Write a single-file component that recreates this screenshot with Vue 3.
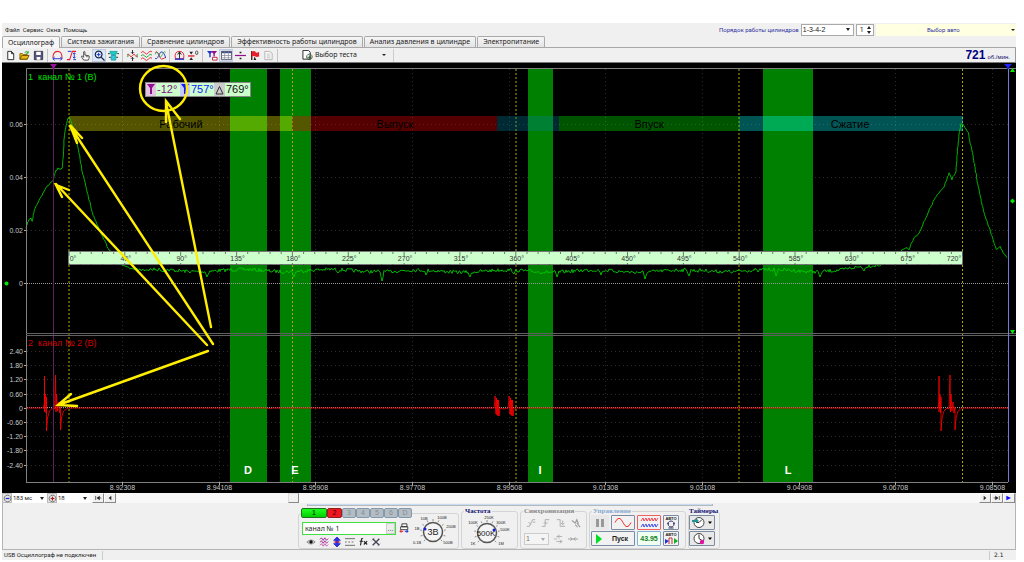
<script setup>
import { ref } from 'vue'

const tabs = ['Осциллограф', 'Система зажигания', 'Сравнение цилиндров', 'Эффективность работы цилиндров', 'Анализ давления в цилиндре', 'Электропитание']
const activeTab = ref(0)
const channel = ref('канал № 1')

const K = '#222', R = '#e8202a', B = '#2030d0', T = '#10a8a0', G = '#18a030', P = '#90108c'
const icons = {
  new: [{ d: 'M3 1.5h4l2.5 2.500v6.500H3zM7 1.500V4h2.500', s: K, f: '#fff' }],
  open: [{ d: 'M1 4h3l1 1h4v5H1z', s: '#806000', f: '#f0c020' }, { d: 'M1 10l2-4h8l-2 4z', s: '#705000', f: '#e8b818' }, { d: 'M6 3q2-3 4 0M10 1v2.500H7.500', s: G }],
  save: [{ d: 'M1.500 1.500h9v9h-9z', s: '#334', f: '#558' }, { d: 'M3.500 2h5v3.500h-5zM4 7.500h4v3H4z', f: '#fff' }],
  dome: [{ d: 'M1 9Q1 1.500 6 1.500T11 9', s: R, w: 1.1 }, { d: 'M1 9.500h10M3 7.500l-2 2 2 2M9 7.500l2 2-2 2', s: B }],
  stretch: [{ d: 'M1 10.500h3L7 1.500h4', s: R, w: 1.1 }, { d: 'M2 1.500h4M8 10.500h3M9 3v6M7.500 4.500L9 3l1.500 1.500M7.500 7.500L9 9l1.500-1.500', s: B }],
  hand: [{ d: 'M4 11L1.500 7l1-.6L4 8V2q.7-1 1.400 0v3.500l4.600 1V9l-1 2z', s: '#333', f: '#fff', w: 0.9 }, { d: 'M7 6v2M8.500 6v2', s: '#333', w: 0.7 }],
  zoom: [{ d: 'M5 1.200a3.700 3.700 0 1 0 .1 0zM8 8l3.500 3.500', s: '#124', w: 1.3 }, { d: 'M3 5h4M5 3v4', s: B }],
  wheel: [{ d: 'M2 1.500h8L8.500 5h-5z', s: T, f: '#20c8c8' }, { d: 'M3.500 6h5v5h-5z', s: '#20a0b0', f: '#30c8d0' }, { d: 'M0 4h2M10 4h2M1 8h2M9 8h2', s: K }],
  center: [{ d: 'M6 0v4M4.500 2.500L6 4l1.500-1.500M6 12V8M4.500 9.500L6 8l1.500 1.500', s: '#223' }, { d: 'M0 6q2-3 3 0t3 0 3 0 3 0', s: R }, { d: 'M0 4l2 2-2 2M12 4l-2 2 2 2', s: G }],
  waves: [{ d: 'M0 3q2-3 4 0t4 0 4-1', s: R }, { d: 'M0 6.500q2-3 4 0t4 0 4-1', s: G }, { d: 'M0 10q2-3 4 0t4 0 4-1', s: R }],
  mix: [{ d: 'M0 3Q2 0 4 5t3 5 5-2', s: R }, { d: 'M0 9Q2 11 4 6t4-4 4 7', s: B }, { d: 'M0 5q2-5 4 0t4 0 4-2', s: G, w: 0.8 }],
  gauge: [{ d: 'M1.500 9.500Q0 1.500 6 1.500t4.500 8z', s: R }, { d: 'M6 2v8M4 5l2-3 2 3', s: K }, { d: 'M1 10h10', s: B, w: 1.5 }],
  zero: [{ d: 'M0 6.500h7', s: R, w: 1.5 }, { d: 'M1.500 2h4l-2 3zM1.500 11h4l-2-3z', f: K }, { d: 'M9.500 1q-1.300 0-1.300 2t1.300 2 1.300-2-1.300-2', s: K, w: 0.8 }],
  marks: [{ d: 'M0 1h6L4 4v4H2.500V4z', f: B }, { d: 'M4 1h7L8.500 4v3H7V4z', f: P }, { d: 'M6 8h5v3H6z', s: '#c02040', f: '#fff' }],
  grid: [{ d: 'M.500 1.500h11v9H.500z', s: '#556', f: '#fff' }, { d: 'M.500 2.500h11', s: '#445080', w: 2 }, { d: 'M.500 6h11M.500 8.500h11M4 2v8.500M8 2v8.500', s: '#889', w: 0.8 }],
  split: [{ d: 'M0 6h12', s: P, w: 1.3 }, { d: 'M5 2h2v1.500H5zM5 8.500h2V10H5z', f: K }],
  flag: [{ d: 'M3 1v10', s: '#300', w: 1.3 }, { d: 'M3 2q3-2 4 0t4 0v5q-3 1-4 0T3 7z', f: R }, { d: 'M6 7l2 4H5z', f: '#222' }],
  list: [{ d: 'M2 1.500h5l3 2v7H2z', s: '#b0b0b0', f: '#fafafa' }, { d: 'M4 4.500h4M4 6.500h4M4 8.500h4', s: '#c0c0c0' }],
  test: [{ d: 'M1 .500h6l2 2V10H1z', s: K, f: '#fff' }, { d: 'M8 4.500a3 3 0 1 0 .1 0zM8 6v4M6 8h4', s: '#3a5a3a', w: 1.2 }],
  printer: [{ d: 'M3.500 1h6v3.500h-6zM2 4.500h8.500V8H2z', s: '#222', f: '#fff' }, { d: 'M1 10h4M1 10l2-1.500M1 10l2 1.500', s: R, w: 1.2 }, { d: 'M7 10h4M11 10L9 8.500M11 10l-2 1.500', s: B, w: 1.2 }],
  eye: [{ d: 'M1 6q5-5 10 0-5 5-10 0', s: '#888', f: '#ccc' }, { d: 'M6 4a2 2 0 1 0 .1 0z', f: '#111' }],
  noise: [{ d: 'M1 3l2-2 2 3 2-3 2 3 2-2M1 6.500l2-2 2 3 2-3 2 3 2-2', s: P }, { d: 'M1 10l2-2 2 3 2-3 2 3 2-2', s: '#c040a0' }],
  updown: [{ d: 'M6 0L2 4h2.500v4H2l4 4 4-4H7.500V4H10z', s: B, f: '#3030e0' }, { d: 'M2 6h8', s: R }],
  lines: [{ d: 'M0 2h12M0 10h12', s: '#555' }, { d: 'M0 6h2M4 6h2M8 6h2', s: '#555' }],
  fx: [{ d: 'M6 2Q4 1 4 4L3 10M2 5h4M7 5l4 4M11 5l-4 4', s: K, w: 1.3 }],
  tools: [{ d: 'M2 2l8 8M2 10l8-8', s: '#445', w: 1.6 }, { d: 'M1 4l3-3M8 11l3-3', s: '#778' }],
  edge1: [{ d: 'M1 10h3L8 2h3M3 5l3 3M8 5h3', s: '#b0b0b0', w: 1.2 }],
  edge2: [{ d: 'M1 10h4V2h5M3 6h5', s: '#b0b0b0', w: 1.2 }],
  edge3: [{ d: 'M1 2h4v8h6M8 3v5M6 6l2 2 2-2', s: '#b0b0b0', w: 1.2 }],
  edge4: [{ d: 'M1 3l4 3 2-4 2 5M7 6l4 5M5 8l3 3', s: '#a0a0a0', w: 1.4 }],
  link1: [{ d: 'M1 6h4M4 3h7M4 9h7M8 1L5 3l3 2M8 7l3 2-3 2', s: '#b0b0b0', w: 1.1 }],
  link2: [{ d: 'M0 6h12M3 4l2 2-2 2M9 4L7 6l2 2', s: '#a0a0a0', w: 1.2 }],
  first: [{ d: 'M2.500 3v6M5 6h6', s: K, w: 1.500 }, { d: 'M8.500 2.500v7L4 6z', f: K }],
  prev: [{ d: 'M8 2.500v7L4 6z', f: K }],
  next: [{ d: 'M4 2.500v7L8 6z', f: K }],
  last: [{ d: 'M9.500 3v6M1 6h6', s: K, w: 1.500 }, { d: 'M3.500 2.500v7L8 6z', f: K }],
  run: [{ d: 'M2 2.500v7L9 6z', f: '#1010ff' }],
  minus: [{ d: 'M6 1.500a4.500 4.500 0 1 0 .1 0z', s: '#555' }, { d: 'M3.500 6h5', s: B, w: 1.6 }],
  plus: [{ d: 'M6 1.500a4.500 4.500 0 1 0 .1 0z', s: '#555' }, { d: 'M3.500 6h5M6 3.500v5', s: '#b01818', w: 1.6 }],
}
const toolGroups = [
  [['new', 'Новый'], ['open', 'Открыть'], ['save', 'Сохранить']],
  [['dome', 'Цикл'], ['stretch', 'Масштаб'], ['hand', 'Рука'], ['zoom', 'Лупа'], ['wheel', 'Прокрутка']],
  [['center', 'Центр'], ['waves', 'Каналы'], ['mix', 'Наложение']],
  [['gauge', 'Градусы'], ['zero', 'Ноль']],
  [['marks', 'Маркеры'], ['grid', 'Сетка'], ['split', 'Разделить'], ['flag', 'Метка'], ['list', 'Список']],
]
const pressed = ['zoom', 'grid']

const gridX = [122.5, 219.5, 315.5, 412.5, 509.5, 605.5, 702.5, 799.5, 895.5, 992.5]
const times = ['8.92308', '8.94108', '8.95908', '8.97708', '8.99508', '9.01308', '9.03108', '9.04908', '9.06708', '9.08508']
const scale1 = [['0.06', 124.5], ['0.04', 177.5], ['0.02', 230.5], ['0', 283.5]]
const scale2 = ['2.40', '1.80', '1.20', '0.60', '0', '-0.60', '-1.20', '-1.80', '-2.40'].map((t, i) => [t, 351.5 + Math.round(i * 14.2)])
const bands = [[230, 37, 'D', 248], [280, 31, 'E', 295], [528, 25, 'I', 540], [763, 50, 'L', 788]]
const deadX = [69, 292.5, 516, 739, 962.5]
const strokes = [
  [69, 223, '#ffff00', 'Рабочий', 181],
  [292, 205, '#ff0000', 'Выпуск', 395],
  [497, 62, '#00809c', '', 0],
  [559, 180, '#00ff00', 'Впуск', 649],
  [739, 224, '#00ffff', 'Сжатие', 850],
]
const degrees = Array.from({ length: 17 }, (_, i) => ({ t: i * 45 + '°', x: i === 0 ? 73 : i === 16 ? 954 : 70 + i * 55.85 }))
const tickPath = Array.from({ length: 81 }, (_, i) => {
  const x = (69 + i * 11.17).toFixed(1), h = i % 5 ? 2 : 4
  return `M${x} 252v${h}M${x} 265v-${i % 5 ? 1 : 2}`
}).join('')

let seed = 7
const rnd = () => (seed = (seed * 16807) % 2147483647) / 2147483647 - 0.5

const lead = [[26, 228], [29, 219], [31, 218], [32, 222], [35, 208], [38, 203], [42, 195], [46, 188], [50, 184], [53, 180], [56, 171], [58, 168], [60, 170], [62, 168], [63, 160], [64, 140], [66, 125], [68, 119], [70, 119], [73, 126], [77, 142], [82, 170], [88, 195], [93, 215], [100, 231], [108, 248], [114, 258], [124, 266], [136, 270]]
const tail = [[880, 265], [895, 256], [902, 250], [907, 248], [909, 250], [913, 240], [920, 231], [927, 215], [935, 198], [944, 187], [949, 173], [952, 179], [956, 171], [957, 155], [959, 135], [961, 124], [964, 125], [968, 133], [972, 150], [977, 180], [982, 205], [987, 222], [992, 236], [996, 249], [1000, 247], [1008, 260]]
const dips = { 163: 272, 207: 277, 294: 277, 338: 273, 382: 281, 426: 275, 470: 277, 514: 274, 557: 277, 601: 275, 645: 279, 689: 276, 732: 273, 758: 272, 776: 276, 820: 277, 864: 271 }
function rough(pts) {
  const out = []
  pts.slice(1).forEach(([x2, y2], i) => {
    const [x1, y1] = pts[i]
    const n = Math.max(1, Math.round(Math.hypot(x2 - x1, y2 - y1) / 2))
    for (let k = 0; k < n; k++) out.push([x1 + ((x2 - x1) * k) / n + rnd() * 0.5, y1 + ((y2 - y1) * k) / n + rnd() * 1.6])
  })
  return out
}
const mid = []
for (let x = 137; x < 880; x++) {
  const near = Object.keys(dips).find(k => Math.abs(x - k) <= 1)
  const bias = x > 380 && x < 700 ? 0.6 : 0
  const slope = x > 840 ? (x - 840) * 0.13 : 0
  const y = 270.5 + bias - slope + Math.sin(x / 14) * 1.1 + rnd() * 3.6
  mid.push([x, near ? (x === +near ? dips[near] : (dips[near] + y) / 2) : y])
}
const trace1 = [...rough(lead), ...mid, ...rough(tail)].map(p => p.map(v => v.toFixed(1)).join(',')).join(' ')

const burst = x => [[0, 408], [1, 402], [1, 376], [1, 412], [2, 394], [2.5, 413], [3, 397], [3, 431], [4, 418], [6, 411], [9, 408], [11, 409], [12, 375], [12.5, 412], [13, 394], [14, 411], [15, 402], [16, 413], [17, 407], [17, 430], [18, 418], [20, 411], [24, 408]].map(([a, b]) => [x + a, b])
const small = x => [[0, 408], [1, 400], [1, 396], [2, 414], [2.5, 398], [3, 415], [3.5, 400], [4, 416], [4.5, 400], [5, 416], [6, 408]].map(([a, b]) => [x + a, b])
const trace2 = [[26, 408], ...burst(43.5), [268, 408], [270, 409], [272, 408], ...small(494), [503, 409], ...small(508), ...burst(938), [1008, 408]].map(p => p.join(',')).join(' ')

const channels = ['1', '2', '3', '4', '5', '6', 'D']
const knobTicks = Array.from({ length: 11 }, (_, i) => {
  const a = ((135 + i * 27) * Math.PI) / 180
  return `M${(28 + 11 * Math.cos(a)).toFixed(1)} ${(20 + 11 * Math.sin(a)).toFixed(1)}L${(28 + 13 * Math.cos(a)).toFixed(1)} ${(20 + 13 * Math.sin(a)).toFixed(1)}`
}).join('')
const knobs = {
  volt: { value: '3В', dot: [20, 17], labels: [['0.1В', 12, 32], ['1В', 12, 18], ['10В', 19, 8], ['100В', 37, 7], ['200В', 46, 16], ['500В', 43, 32]] },
  freq: { value: '500K', dot: [35, 17], labels: [['1K', 14, 32], ['100K', 14, 11], ['250K', 30, 6], ['300K', 42, 11], ['500K', 46, 18], ['1M', 42, 32]] },
}
</script>

<template>
  <div class="page">
    <div class="window">
      <header class="top">
        <nav class="menu">
          <button v-for="m in ['Файл', 'Сервис', 'Окна', 'Помощь']" :key="m">{{ m }}</button>
        </nav>
        <div class="order">
          <label for="order">Порядок работы цилиндров</label>
          <div class="combo"><select id="order"><option>1-3-4-2</option></select><i class="arrow"></i></div>
          <div class="spin"><input value="1" aria-label="Цилиндр" /><span><i class="arrow up"></i><i class="arrow"></i></span></div>
          <button class="car"><span>Выбор авто</span><i class="arrow tiny"></i></button>
        </div>
      </header>

      <div class="tabs">
        <button v-for="(t, i) in tabs" :key="t" :class="{ active: i === activeTab }" @click="activeTab = i">{{ t }}</button>
      </div>

      <div class="toolbar">
        <div v-for="(g, gi) in toolGroups" :key="gi" class="tgroup">
          <button v-for="[n, title] in g" :key="n" :aria-label="title" :class="{ on: pressed.includes(n) }">
            <svg class="ico" viewBox="0 0 12 12"><path v-for="(p, k) in icons[n]" :key="k" :d="p.d" :stroke="p.s || 'none'" :fill="p.f || 'none'" :stroke-width="p.w || 1" /></svg>
          </button>
        </div>
        <button class="test">
          <svg class="ico" viewBox="0 0 12 12"><path v-for="(p, k) in icons.test" :key="k" :d="p.d" :stroke="p.s" :fill="p.f || 'none'" /></svg>
          <span>Выбор теста</span><i class="arrow tiny"></i>
        </button>
        <div class="rpm"><b>721</b><span>об./мин.</span></div>
      </div>

      <svg class="scope" viewBox="2 63 1014 430" role="img" aria-label="Осциллограмма">
        <rect x="2" y="63" width="1014" height="430" fill="#000" />
        <g class="grid">
          <path v-for="x in gridX" :key="x" :d="`M${x} 69V482`" />
          <path v-for="[, y] in scale1" :key="y" :d="`M27 ${y}H1008`" />
          <path v-for="[, y] in scale2" :key="y" :d="`M27 ${y}H1008`" />
        </g>
        <rect v-for="b in bands" :key="b[2]" :x="b[0]" y="69" :width="b[1]" height="413" fill="#008000" />
        <path d="M27 283.500H1008M27 407.500H1008" stroke="#999" stroke-dasharray="1 1" />
        <path v-for="x in deadX" :key="x" :d="`M${x} 69V482`" stroke="#b0a800" stroke-dasharray="2 2" />
        <g class="strokes">
          <template v-for="s in strokes" :key="s[0]">
            <rect :x="s[0]" y="116" :width="s[1]" height="15" :fill="s[2]" opacity="0.33" />
            <text :x="s[4]" y="128">{{ s[3] }}</text>
          </template>
        </g>
        <polyline :points="trace1" fill="none" stroke="#00c800" stroke-width="0.9" />
        <polyline :points="trace2" fill="none" stroke="#f00" stroke-width="0.8" />
        <path d="M53.500 66V482" stroke="#602060" />
        <path d="M26.500 482V68.500H1016M26 482.500H1008" fill="none" stroke="#808080" />
        <path d="M26 333.500H1016M26 335.500H1016" stroke="#606060" />
        <path d="M1008.500 66V482" stroke="#7878d8" />
        <g class="ruler">
          <rect x="68.500" y="251.500" width="894" height="13" fill="#ccffcc" stroke="#777" />
          <path :d="tickPath" stroke="#555" stroke-width="0.8" />
          <text v-for="d in degrees" :key="d.t" :x="d.x" y="261">{{ d.t }}</text>
        </g>
        <g class="scale">
          <text v-for="[t, y] in scale1" :key="t" x="23" :y="y + 2.5">{{ t }}</text>
          <text v-for="[t, y] in scale2" :key="t" x="23" :y="y + 2.5">{{ t }}</text>
          <path v-for="[, y] in scale1.concat(scale2)" :key="y" :d="`M24 ${y}h2`" stroke="#aaa" />
        </g>
        <g class="times">
          <text v-for="(t, i) in times" :key="t" :x="gridX[i]" y="490">{{ t }}</text>
          <path v-for="x in gridX" :key="x" :d="`M${x} 482v3`" stroke="#aaa" />
        </g>
        <text class="chan" x="28" y="80" fill="#00e000">1&#160; канал № 1 (В)</text>
        <text class="chan" x="28" y="346" fill="#d00000">2&#160; канал № 2 (В)</text>
        <text v-for="b in bands" :key="b[2]" class="band" :x="b[3]" y="474">{{ b[2] }}</text>
        <path d="M50 64h7l-2.500 3v2h-2v-2z" fill="#a010a0" />
        <path d="M1004 64h8l-3 3v2h-2v-2z" fill="#2020ff" />
        <path d="M1010 72h5l-2.500-4zM1010 330h5l-2.500 4zM1012.500 198.500l2.500 2.500-2.500 2.500-2.500-2.500z" fill="#00e800" />
        <circle cx="6.500" cy="283.500" r="2" fill="#00e800" />

        <g class="readout">
          <rect x="145.500" y="82.500" width="105" height="14" fill="#ccffcc" stroke="#888" />
          <rect x="146" y="83" width="10" height="13" fill="#e0c4e0" />
          <rect x="180" y="83" width="10" height="13" fill="#c4c8ff" />
          <rect x="214" y="83" width="11" height="13" fill="#ccc" />
          <path d="M147 84h8l-3 4v6h-2v-6z" fill="#901090" />
          <path d="M181 84h8l-3 4v6h-2v-6z" fill="#1018ff" />
          <path d="M216 94l3.500-7.500L223 94z" fill="none" stroke="#333" />
          <text x="157" y="93" fill="#801080">-12°</text>
          <text x="191" y="93" fill="#1018ff">757°</text>
          <text x="226" y="93" fill="#111">769°</text>
        </g>
        <g class="notes">
          <ellipse cx="163.500" cy="88.500" rx="23.500" ry="22.500" />
          <path d="M211 327L166 102M166 122l0-21 14 18" />
          <path d="M213 344L70 126M77 143l-7-18 12 13" />
          <path d="M207 345L56 184M62 197l-6-12 13 5" />
          <path d="M208 351L58 405M71 394l-13 11 19 1" />
        </g>
      </svg>

      <div class="scroll">
        <template v-for="[n, v, c] in [['minus', '183 мс', 'a'], ['plus', '18', 'b']]" :key="n">
          <button class="sq" :aria-label="n"><svg class="ico" viewBox="0 0 12 12"><path v-for="(p, k) in icons[n]" :key="k" :d="p.d" :stroke="p.s" fill="none" :stroke-width="p.w || 1" /></svg></button>
          <div class="combo flat" :class="c"><select :aria-label="n"><option>{{ v }}</option></select><i class="arrow"></i></div>
        </template>
        <button v-for="n in ['first', 'prev']" :key="n" class="nav" :aria-label="n"><svg class="ico" viewBox="0 0 12 12"><path v-for="(p, k) in icons[n]" :key="k" :d="p.d" :stroke="p.s || 'none'" :fill="p.f || 'none'" /></svg></button>
        <div class="track"><span class="thumb"></span></div>
        <button v-for="n in ['next', 'last', 'run']" :key="n" class="nav" :aria-label="n"><svg class="ico" viewBox="0 0 12 12"><path v-for="(p, k) in icons[n]" :key="k" :d="p.d" :stroke="p.s || 'none'" :fill="p.f || 'none'" /></svg></button>
      </div>

      <section class="panel">
        <div class="inner">
          <div class="splitter"></div>
          <div class="groups">
            <fieldset class="channels">
              <legend><button v-for="c in channels" :key="c" :class="'c' + c">{{ c }}</button></legend>
              <div class="chbody">
                <div class="chrow">
                  <div class="name"><input v-model="channel" aria-label="Название канала" /><button>...</button></div>
                  <button class="ic" aria-label="Экспорт"><svg class="ico" viewBox="0 0 12 12"><path v-for="(p, k) in icons.printer" :key="k" :d="p.d" :stroke="p.s" :fill="p.f || 'none'" :stroke-width="p.w || 1" /></svg></button>
                </div>
                <div class="chicons">
                  <button v-for="n in ['eye', 'noise', 'updown', 'lines', 'fx', 'tools']" :key="n" class="ic" :aria-label="n"><svg class="ico" viewBox="0 0 12 12"><path v-for="(p, k) in icons[n]" :key="k" :d="p.d" :stroke="p.s || 'none'" :fill="p.f || 'none'" :stroke-width="p.w || 1" /></svg></button>
                </div>
              </div>
              <svg class="knob" viewBox="0 0 56 36">
                <path :d="knobTicks" stroke="#777" stroke-width="0.8" />
                <circle cx="28" cy="20" r="9.500" fill="#f4f4f4" stroke="#555" stroke-width="1.500" />
                <circle :cx="knobs.volt.dot[0]" :cy="knobs.volt.dot[1]" r="1.500" fill="#1020e0" />
                <text v-for="l in knobs.volt.labels" :key="l[0]" :x="l[1]" :y="l[2]">{{ l[0] }}</text>
                <text class="big" x="28" y="23">{{ knobs.volt.value }}</text>
              </svg>
            </fieldset>
            <fieldset class="freq">
              <legend>Частота</legend>
              <svg class="knob" viewBox="0 0 56 36">
                <path :d="knobTicks" stroke="#777" stroke-width="0.8" />
                <circle cx="28" cy="20" r="9.500" fill="#f4f4f4" stroke="#555" stroke-width="1.500" />
                <circle :cx="knobs.freq.dot[0]" :cy="knobs.freq.dot[1]" r="1.500" fill="#1020e0" />
                <text v-for="l in knobs.freq.labels" :key="l[0] + l[1]" :x="l[1]" :y="l[2]">{{ l[0] }}</text>
                <text class="mid" x="27" y="23">{{ knobs.freq.value }}</text>
              </svg>
            </fieldset>
            <fieldset class="sync">
              <legend>Синхронизация</legend>
              <div class="srow">
                <button v-for="n in ['edge1', 'edge2', 'edge3', 'edge4']" :key="n" class="ic" :aria-label="n"><svg class="ico" viewBox="0 0 12 12"><path v-for="(p, k) in icons[n]" :key="k" :d="p.d" :stroke="p.s" fill="none" :stroke-width="p.w" /></svg></button>
              </div>
              <div class="srow">
                <div class="combo dim"><select aria-label="Канал синхронизации"><option>1</option></select><i class="arrow"></i></div>
                <button v-for="n in ['link1', 'link2']" :key="n" class="ic" :aria-label="n"><svg class="ico" viewBox="0 0 12 12"><path v-for="(p, k) in icons[n]" :key="k" :d="p.d" :stroke="p.s" fill="none" :stroke-width="p.w" /></svg></button>
              </div>
            </fieldset>
            <fieldset class="control">
              <legend>Управление</legend>
              <div class="crow">
                <button class="pause" aria-label="Пауза"><svg viewBox="0 0 18 14"><path d="M6.500 3v8M11.500 3v8" stroke="#999" stroke-width="3" /></svg></button>
                <button class="fr sine" aria-label="Синус"><svg viewBox="0 0 22 13"><path d="M3 6.500Q7-2 11 6.500T19 6.500" fill="none" stroke="#f03030" /></svg></button>
                <button class="fr red" aria-label="Сигналы"><svg viewBox="0 0 22 13"><path d="M3 5l2-3 1 3 2-3 1 3 2-3 1 3 2-3 1 3 2-3 1 3 2-3" fill="none" stroke="#f02030" stroke-width="0.8" /><path d="M3 11l2-3 1 3 2-3 1 3 2-3 1 3 2-3 1 3 2-3 1 3 2-3" fill="none" stroke="#2030e0" stroke-width="0.8" /></svg></button>
                <button class="fr auto" aria-label="Авто"><svg viewBox="0 0 14 13"><text x="7" y="4">АВТО</text><path d="M7 5a3 3 0 1 0 .1 0zM3 7l2 1M11 7l-2 1M4.500 12h5" fill="none" stroke="#336" /></svg></button>
              </div>
              <div class="crow">
                <button class="fr start"><svg viewBox="0 0 8 12"><path d="M1 1l6 5-6 5z" fill="#00e020" /></svg><span>Пуск</span></button>
                <output class="fr val">43.95</output>
                <button class="fr auto" aria-label="Автозапуск"><svg viewBox="0 0 14 13"><text x="7" y="4">АВТО</text><path d="M5 12V6h3v6" fill="none" stroke="#c03030" /><path d="M1 7l4 2-4 3z" fill="#2030e0" /><path d="M10 6l4 3-4 3z" fill="#10b020" /></svg></button>
              </div>
            </fieldset>
            <fieldset class="timers">
              <legend>Таймеры</legend>
              <button class="fr" aria-label="Таймер 1"><svg viewBox="0 0 24 13"><circle cx="9" cy="6.500" r="5" fill="#fff" stroke="#444" /><path d="M9 6.500l3-3M9 6.500H6" stroke="#333" /><path d="M2 4h4V2l3 3-3 2V6H2z" fill="#209090" /><path d="M18 5.500h4l-2 2.500z" fill="#000" /></svg></button>
              <button class="fr" aria-label="Таймер 2"><svg viewBox="0 0 24 13"><circle cx="9" cy="6.500" r="5" fill="#fff" stroke="#444" /><path d="M9 6.500V2.500M9 6.500l3 2" stroke="#333" /><circle cx="12" cy="10" r="2.200" fill="#e010a0" /><path d="M18 5.500h4l-2 2.500z" fill="#000" /></svg></button>
            </fieldset>
          </div>
        </div>
      </section>

      <footer class="status"><span>USB Осциллограф не подключен</span><span></span><span>2.1</span></footer>
    </div>
  </div>
</template>

<style>
body { background: #fff; }
</style>

<style scoped>
.page { padding: 23px 8px 2px 2px; font-family: "Liberation Sans", Arial, sans-serif; font-size: 7px; line-height: 8px; color: #222; }
.window { background: #f0f0f0; }
button, input, select { font: inherit; color: inherit; padding: 0; margin: 0; border: 0; background: none; border-radius: 0; }
select { appearance: none; outline: 0; width: 100%; min-width: 0; }
input { min-width: 0; outline: 0; }
svg { display: block; }
.ico { width: 11px; height: 11px; }
.arrow { border: 2px solid transparent; border-top: 3px solid #222; border-bottom: 0; flex: none; }
.arrow.up { border-top: 0; border-bottom: 3px solid #222; }
.arrow.tiny { border-top-width: 2px; }

.top { display: flex; justify-content: space-between; height: 13px; }
.menu { display: flex; gap: 3px; padding: 2px 3px; font-family: Roboto, sans-serif; font-size: 6px; }
.menu button { white-space: nowrap; }
.order { display: flex; align-items: center; gap: 2px; font-family: Roboto, sans-serif; font-size: 6px; width: 297px; color: #3030a0; }
.order label { flex: 1; white-space: nowrap; }
.combo { display: flex; align-items: center; background: #fff; border: 1px solid #aaa; padding: 0 3px 0 1px; box-sizing: border-box; height: 12px; color: #222; }
.order .combo { width: 54px; font-family: "Liberation Sans", Arial, sans-serif; font-size: 7px; }
.spin { display: flex; align-items: center; justify-content: space-between; width: 18px; height: 12px; box-sizing: border-box; border: 1px solid #aaa; background: #fff; padding: 0 2px 0 3px; color: #222; font-size: 7px; }
.spin input { width: 6px; }
.spin span { display: grid; gap: 2px; }
.car { display: flex; align-items: center; width: 143px; height: 12px; background: #ffffe1; color: #3030a0; padding-right: 1px; }
.car span { flex: 1; }
.car .arrow { border-top-color: #222; }

.tabs { display: flex; height: 12px; border-bottom: 1px solid #a8a8a8; font-family: "Noto Sans", sans-serif; font-size: 7px; box-sizing: border-box; }
.tabs button { border: 1px solid #aaa; border-bottom: 0; border-radius: 2px 2px 0 0; background: linear-gradient(#f6f6f6, #e4e4e4); padding: 0 5px; margin-right: 1px; white-space: nowrap; }
.tabs .active { background: #f6f6f6; margin-bottom: -1px; }

.toolbar { display: flex; align-items: center; height: 15px; padding-left: 1px; border-right: 1px solid #999; border-bottom: 1px solid #777; box-sizing: border-box; }
.tgroup { display: flex; padding-right: 2px; margin-right: 2px; border-right: 1px solid #c4c4c4; }
.tgroup button { width: 14px; height: 13px; display: grid; place-items: center; }
.tgroup button.on { background: #dde8f8; box-shadow: inset 0 0 0 1px #c0cce0; }
.tgroup:last-of-type { border: 0; }
.test { display: flex; align-items: center; gap: 2px; width: 92px; height: 13px; margin-left: 22px; padding-right: 7px; box-sizing: border-box; border-right: 1px solid #ccc; font-family: "Noto Sans", sans-serif; font-size: 7px; }
.test span { flex: 1; text-align: left; white-space: nowrap; }
.rpm { margin-left: auto; display: flex; align-items: baseline; gap: 2px; padding-right: 5px; color: #10106c; font-size: 6px; }
.rpm b { font-size: 12px; line-height: 13px; color: #000080; }

.scope { width: 100%; height: auto; }
.grid path { stroke: #2c2c2c; stroke-dasharray: 1 3; }
.strokes text { font-size: 11px; text-anchor: middle; fill: #000; }
.ruler text { font-size: 7px; text-anchor: middle; fill: #333; }
.scale text { font-size: 7px; text-anchor: end; fill: #c8c8c8; }
.times text { font-size: 7px; text-anchor: middle; fill: #c8c8c8; }
.chan { font-size: 9px; white-space: pre; }
.band { font-size: 11px; font-weight: bold; text-anchor: middle; fill: #fff; }
.readout text { font-size: 11px; }
.notes { fill: none; stroke: #ffee00; stroke-width: 2.4; stroke-linecap: round; }

.scroll { display: flex; height: 10px; background: #f8f8f8; border-right: 1px solid #bbb; }
.sq { width: 10px; background: #e4e4e4; border: 1px solid #bbb; display: grid; place-items: center; box-sizing: border-box; }
.sq .ico { width: 9px; height: 9px; }
.combo.flat { border: 0; height: 10px; width: 35px; font-family: Roboto, sans-serif; font-size: 6px; }
.combo.flat.b { width: 33px; margin-right: 2px; }
.nav { width: 12px; box-sizing: border-box; background: #f0f0f0; border: 1px solid #fff; border-right-color: #888; border-bottom-color: #888; display: grid; place-items: center; }
.nav .ico { width: 8px; height: 8px; }
.track { flex: 1; display: flex; padding-left: 17%; }
.thumb { width: 11px; box-sizing: border-box; background: #f0f0f0; border: 1px solid #ddd; border-right-color: #888; border-bottom-color: #888; }

.panel { display: flex; justify-content: center; border: 1px solid #b4b4b4; border-top: 0; height: 47px; box-sizing: border-box; }
.inner { width: 422px; }
.splitter { height: 2px; margin: 1px 7px 2px 9px; border: 1px solid #b8b8b8; border-top: 0; background: #c4dcf4; box-sizing: border-box; }
.groups { display: flex; gap: 2px; }
fieldset { margin: 0; padding: 0; border: 1px solid #d4d4d4; border-radius: 3px; height: 41px; box-sizing: border-box; min-width: 0; }
legend { padding: 0 1px; margin-left: 2px; font: bold 7px/7px "Liberation Serif", serif; color: #101070; white-space: nowrap; }
.channels { width: 161px; display: flex; }
.channels legend { display: flex; font: 7px/8px "Liberation Sans", Arial, sans-serif; padding: 0; }
.channels legend button { width: 14px; height: 10px; box-sizing: border-box; border: 1px solid #8498ac; border-radius: 2px; background: #b4bcc4; color: #848c94; }
.channels legend .c1 { width: 26px; background: linear-gradient(#20ff20, #00d000); color: #000; border-color: #207020; }
.channels legend .c2 { background: #f01820; color: #300; border-color: #902020; width: 15px; }
.chbody { width: 110px; flex: none; }
.chrow { display: flex; gap: 2px; margin: 4px 0 0 3px; }
.name { display: flex; width: 94px; height: 13px; box-sizing: border-box; border: 1px solid #40e040; background: #fff; }
.name input { flex: 1; padding-left: 2px; font-family: "Noto Sans", sans-serif; font-size: 7px; }
.name button { width: 9px; background: #ececec; border: 1px solid #ccc; line-height: 4px; }
.chicons { display: flex; padding-left: 5px; margin-top: 1px; }
.ic { width: 13px; height: 12px; display: grid; place-items: center; }
.ic .ico { width: 10px; height: 10px; }
.knob { width: 56px; height: 36px; }
.channels .knob { margin: -6px 0 0 -4px; flex: none; }
.knob text { font-size: 4px; text-anchor: middle; fill: #222; }
.knob .big { font-size: 9px; }
.knob .mid { font-size: 8px; }
.freq { width: 57px; }
.freq .knob { margin-left: -3px; margin-top: -2px; }
.sync { width: 67px; }
.sync legend { color: #888; }
.srow { display: flex; height: 16px; align-items: center; gap: 2px; padding-left: 3px; }
.combo.dim { width: 25px; border-color: #ccc; background: #f4f4f4; color: #777; }
.dim .arrow { border-top-color: #aaa; }
.control { width: 97px; }
.control legend { color: #88a8d0; }
.crow { display: flex; gap: 2px; padding-left: 1px; margin-bottom: 1px; height: 15px; }
.crow > * { box-sizing: border-box; height: 15px; }
.fr { border: 1px solid #7c8ca0; border-radius: 1px; background: #f2f2f2; display: grid; place-items: center; }
.pause { width: 18px; background: #e8e8e8; }
.pause svg { width: 18px; height: 14px; }
.sine, .red, .val { width: 24px; }
.sine svg, .red svg { width: 22px; height: 13px; }
.red { border-color: #f06060; }
.auto { width: 16px; }
.auto svg { width: 14px; height: 13px; }
.auto text { font-size: 4px; font-weight: bold; text-anchor: middle; fill: #222; }
.start { width: 44px; grid-template-columns: 14px 1fr; font: bold 7px/8px "Liberation Sans", Arial, sans-serif; }
.start svg { width: 8px; height: 12px; }
.val { font: bold 7px/8px "Liberation Sans", Arial, sans-serif; color: #108020; background: #f0fff0; border-color: #88b0d8; }
.timers { width: 32px; }
.timers legend { margin-left: -1px; }
.timers .fr { width: 26px; height: 15px; margin-bottom: 1px; background: #e8e8e8; }
.timers svg { width: 24px; height: 13px; }

.status { display: flex; gap: 2px; height: 10px; box-sizing: border-box; padding-top: 1px; font-family: Roboto, sans-serif; font-size: 6px; }
.status span { border-right: 1px solid #ccc; padding-left: 2px; }
.status span:first-child { width: 98px; white-space: nowrap; }
.status span:nth-child(2) { flex: 1; }
.status span:last-child { width: 22px; border: 0; font-family: "DejaVu Sans", sans-serif; }
</style>
